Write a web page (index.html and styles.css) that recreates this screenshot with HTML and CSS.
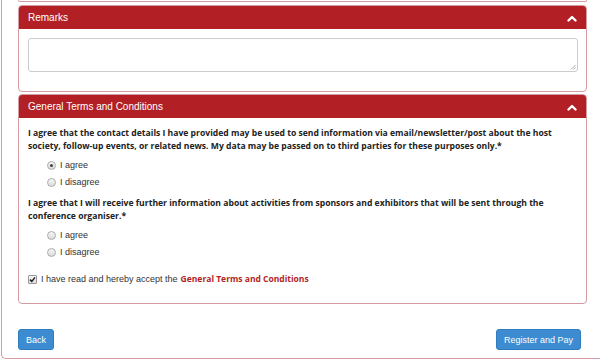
FILE: index.html
```html
<!DOCTYPE html>
<html>
<head>
<meta charset="utf-8">
<link rel="stylesheet" href="styles.css">
</head>
<body>
<div class="wrap">
  <div class="prev"></div>
  <section class="panel">
    <div class="panel-head">
      <span>Remarks</span>
      <svg class="chev" width="10" height="8" viewBox="0 0 10 8"><path d="M1.5 6.5 L5 3 L8.5 6.5" fill="none" stroke="#fff" stroke-width="2.4" stroke-linecap="round" stroke-linejoin="round"/></svg>
    </div>
    <div class="panel-body remarks-body">
      <div class="textarea"><svg class="grip" width="6" height="6" viewBox="0 0 6 6"><path d="M5.5 1 L1 5.5 M5.5 3.5 L3.5 5.5" stroke="#999" stroke-width="0.8"/></svg></div>
    </div>
  </section>
  <section class="panel">
    <div class="panel-head">
      <span>General Terms and Conditions</span>
      <svg class="chev" width="10" height="8" viewBox="0 0 10 8"><path d="M1.5 6.5 L5 3 L8.5 6.5" fill="none" stroke="#fff" stroke-width="2.4" stroke-linecap="round" stroke-linejoin="round"/></svg>
    </div>
    <div class="panel-body terms-body">
      <p class="q">I agree that the contact details I have provided may be used to send information via email/newsletter/post about the host society, follow-up events, or related news. My data may be passed on to third parties for these purposes only.*</p>
      <div class="opts">
        <div class="opt"><span class="radio checked"></span>I agree</div>
        <div class="opt"><span class="radio"></span>I disagree</div>
      </div>
      <p class="q">I agree that I will receive further information about activities from sponsors and exhibitors that will be sent through the conference organiser.*</p>
      <div class="opts">
        <div class="opt"><span class="radio"></span>I agree</div>
        <div class="opt"><span class="radio"></span>I disagree</div>
      </div>
      <div class="accept"><span class="check"><svg width="7" height="7" viewBox="0 0 7 7"><path d="M1 3.6 L2.8 5.4 L6 1.4" fill="none" stroke="#222" stroke-width="1.5"/></svg></span>I have read and hereby accept the <a class="terms-link">General Terms and Conditions</a></div>
    </div>
  </section>
  <div class="actions">
    <button class="btn">Back</button>
    <button class="btn">Register and Pay</button>
  </div>
</div>
</body>
</html>
```
FILE: styles.css
```css
html, body {
  margin: 0;
  padding: 0;
  background: #fff;
  overflow: hidden;
}
body {
  font-family: "Liberation Sans", Arial, sans-serif;
  color: #333;
  width: 600px;
  height: 361px;
}
.wrap {
  margin-left: 1px;
  height: 358px;
  border-left: 1px solid #d49ca2;
  border-bottom: 1px solid #d49ca2;
  border-bottom-left-radius: 5px;
  padding: 0 12px 0 16px;
  display: flex;
  flex-direction: column;
}
.prev {
  height: 1px;
  border: 1px solid #d49ca2;
  border-top: none;
  border-radius: 0 0 4px 4px;
  width: 567px;
}
.panel {
  margin-top: 3px;
  width: 567px;
  border: 1px solid #d49ca2;
  border-radius: 4px;
  overflow: hidden;
}
.panel + .panel { margin-top: 2px; }
.panel-head {
  background: #b21f24;
  color: #fff;
  height: 23px;
  display: flex;
  align-items: center;
  justify-content: space-between;
  padding: 0 9px 0 9px;
  font-size: 10px;
}
.chev { display: block; }
.remarks-body {
  padding: 9px 8px 19px 9px;
}
.textarea {
  height: 32px;
  border: 1px solid #ccc;
  border-radius: 3px;
  position: relative;
}
.grip { position: absolute; right: 1px; bottom: 1px; }
.terms-body {
  padding: 9px 9px 18px 9px;
}
.q {
  margin: 0;
  font-family: "Open Sans", "DejaVu Sans", Verdana, sans-serif;
  font-weight: bold;
  font-size: 8.6px;
  line-height: 13px;
  color: #222;
}
.opts {
  padding: 6px 0 9px 19px;
  display: flex;
  flex-direction: column;
  gap: 5px;
}
.opts + .accept { margin-top: 6px; }
.opt {
  font-size: 9px;
  line-height: 12px;
  display: flex;
  align-items: center;
  color: #333;
}
.radio {
  width: 7px;
  height: 7px;
  border: 1px solid #aaa;
  border-radius: 50%;
  background: linear-gradient(#f6f6f6, #dcdcdc);
  margin-right: 4px;
  position: relative;
}
.radio.checked::after {
  content: "";
  position: absolute;
  left: 2px;
  top: 2px;
  width: 3px;
  height: 3px;
  border-radius: 50%;
  background: #444;
}
.accept {
  font-size: 9px;
  line-height: 12px;
  display: flex;
  align-items: center;
}
.check {
  width: 7px;
  height: 7px;
  border: 1px solid #999;
  border-radius: 1px;
  background: linear-gradient(#f6f6f6, #ddd);
  margin-right: 4px;
  display: flex;
  align-items: center;
  justify-content: center;
}
.check svg { display: block; }
.terms-link {
  font-family: "Open Sans", "DejaVu Sans", Verdana, sans-serif;
  font-weight: bold;
  font-size: 8.5px;
  color: #b21f24;
  margin-left: 3px;
}
.actions {
  margin-top: 25px;
  width: 563px;
  display: flex;
  justify-content: space-between;
}
.btn {
  font-family: "Liberation Sans", Arial, sans-serif;
  font-size: 9px;
  color: #fff;
  background: #3d8bd0;
  border: 1px solid #2f7bbf;
  border-radius: 3px;
  height: 21px;
  padding: 0 7px;
}
```
